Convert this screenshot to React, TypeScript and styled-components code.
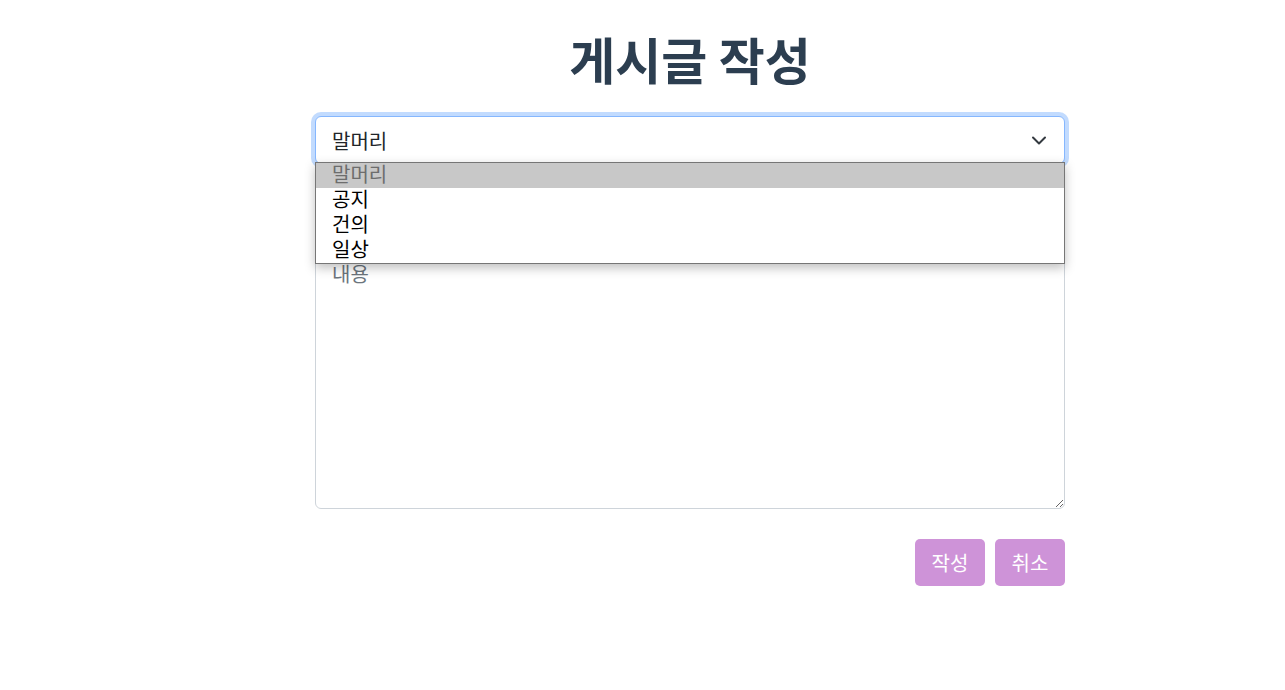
import styled, { createGlobalStyle } from 'styled-components';

const GlobalStyle = createGlobalStyle`
  body {
    margin: 0;
    background: #fff;
    font-family: 'Noto Sans CJK KR', 'Noto Sans', sans-serif;
    color: #212529;
  }
  * { box-sizing: border-box; }
`;

const Page = styled.div`
  display: flex;
  justify-content: center;
  padding-left: 95px;
`;

const FormWrap = styled.div`
  width: 750px;
  display: flex;
  flex-direction: column;
`;

const Title = styled.h1`
  margin: 22px 0 22px;
  text-align: center;
  font-size: 50px;
  line-height: 72px;
  font-weight: 700;
  color: #2c3e50;
`;

const SelectBox = styled.div`
  position: relative;
  margin-bottom: 16px;
`;

const Select = styled.select`
  appearance: none;
  width: 100%;
  height: 48px;
  padding: 0 48px 0 16px;
  font-family: inherit;
  font-size: 20px;
  color: #212529;
  background: #fff;
  border: 1px solid #86b7fe;
  border-radius: 6px;
  box-shadow: 0 0 0 4px rgba(13, 110, 253, 0.25);
  outline: none;
`;

const Chevron = styled.svg`
  position: absolute;
  right: 18px;
  top: 18px;
  pointer-events: none;
`;

const OptionList = styled.ul`
  position: absolute;
  z-index: 10;
  left: 0;
  right: 0;
  top: 46px;
  margin: 0;
  padding: 0;
  list-style: none;
  background: #fff;
  border: 1px solid #767676;
  box-shadow: 0 4px 10px rgba(0, 0, 0, 0.25);
`;

const OptionItem = styled.li<{ $disabled?: boolean }>`
  height: 25px;
  padding: 0 0 4px 16px;
  font-size: 20px;
  line-height: 21px;
  color: ${(p) => (p.$disabled ? '#6d6d6d' : '#000')};
  background: ${(p) => (p.$disabled ? '#c8c8c8' : '#fff')};
`;

const Input = styled.input`
  height: 48px;
  margin-bottom: 22px;
  padding: 8px 16px;
  font-family: inherit;
  font-size: 20px;
  border: 1px solid #ced4da;
  border-radius: 6px;
`;

const TextArea = styled.textarea`
  height: 259px;
  padding: 8px 16px;
  font-family: inherit;
  font-size: 20px;
  line-height: 1.5;
  color: #212529;
  border: 1px solid #ced4da;
  border-radius: 6px;
  resize: vertical;
  &::placeholder { color: #6c757d; }
`;

const ButtonRow = styled.div`
  display: flex;
  justify-content: flex-end;
  gap: 10px;
  margin-top: 30px;
`;

const Button = styled.button`
  height: 47px;
  width: 70px;
  padding: 0;
  font-family: inherit;
  font-size: 20px;
  color: #fff;
  background: #ce93d8;
  border: none;
  border-radius: 5px;
  cursor: pointer;
`;

const options = ['공지', '건의', '일상'];

export default function App() {
  return (
    <>
      <GlobalStyle />
      <Page>
        <FormWrap>
          <Title>게시글 작성</Title>
          <SelectBox>
            <Select defaultValue=''>
              <option value='' disabled>
                말머리
              </option>
              {options.map((o) => (
                <option key={o}>{o}</option>
              ))}
            </Select>
            <Chevron width='16' height='12' viewBox='0 0 16 12'>
              <path
                d='M2 3.5l6 6 6-6'
                fill='none'
                stroke='#343a40'
                strokeWidth='2'
                strokeLinecap='round'
                strokeLinejoin='round'
              />
            </Chevron>
            <OptionList>
              <OptionItem $disabled>말머리</OptionItem>
              {options.map((o) => (
                <OptionItem key={o}>{o}</OptionItem>
              ))}
            </OptionList>
          </SelectBox>
          <Input placeholder='제목' />
          <TextArea placeholder='내용' />
          <ButtonRow>
            <Button>작성</Button>
            <Button>취소</Button>
          </ButtonRow>
        </FormWrap>
      </Page>
    </>
  );
}
